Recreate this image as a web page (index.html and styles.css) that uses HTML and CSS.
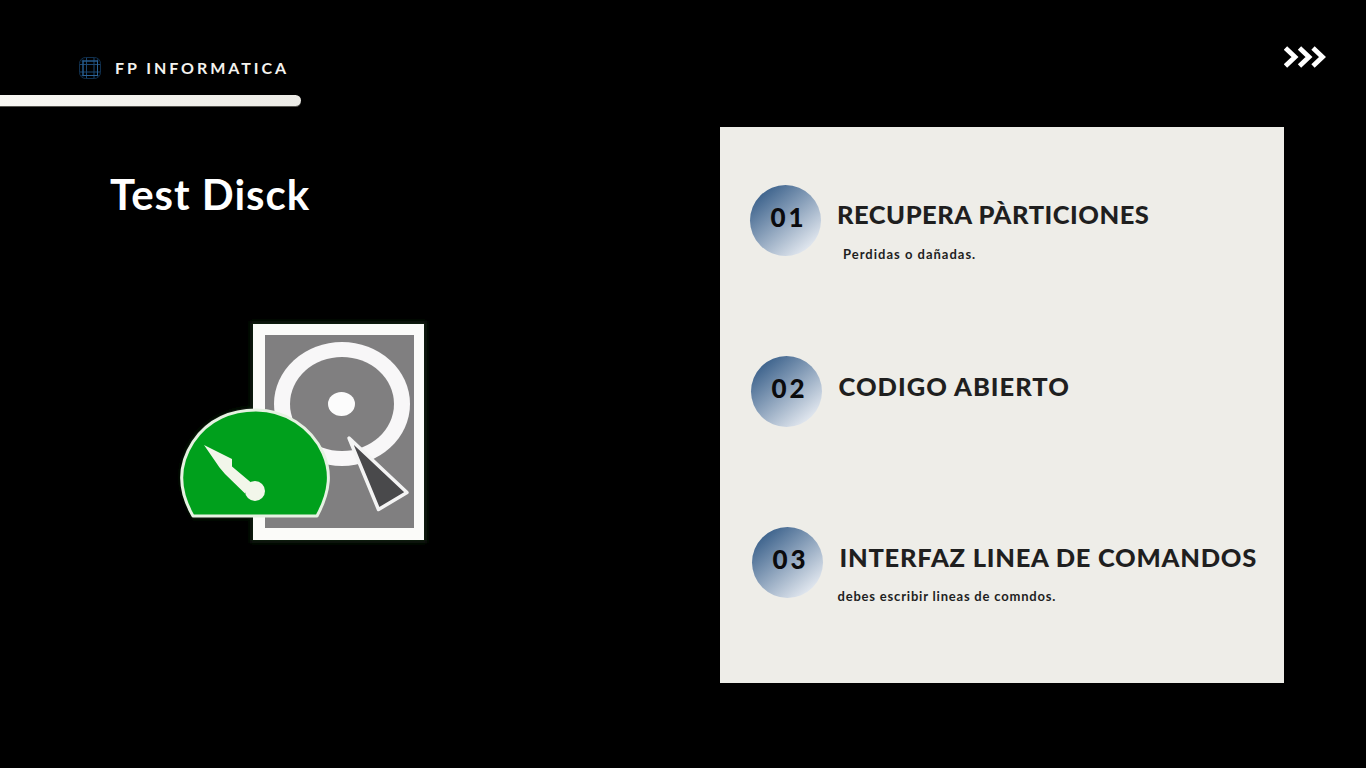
FILE: index.html
```html
<!DOCTYPE html>
<html lang="es">
<head>
<meta charset="utf-8">
<title>Test Disck</title>
<link rel="stylesheet" href="styles.css">
</head>
<body>
<main class="slide">
  <section class="left">
    <div class="brand">
      <svg class="brand-icon" viewBox="0 0 22 22" fill="none" stroke="#1b4670" stroke-width="1">
        <path d="M4 2.500V19.500M7.500 0.500V21.500M15 0.500V21.500M18.500 2.500V19.500"/>
        <path d="M2.500 4H19.500M0.500 7.500H21.500M0.500 15H21.500M2.500 18.500H19.500"/>
        <rect x="0.500" y="0.500" width="21" height="21" rx="6" stroke="#10304f"/>
        <rect x="4" y="4" width="14.500" height="14.500" stroke="#2a6296"/>
      </svg>
      <span class="brand-name">FP INFORMATICA</span>
    </div>
    <div class="bar"></div>
    <h1 class="title">Test Disck</h1>
    <svg class="disk" viewBox="170 315 265 235">
      <defs>
        <filter id="soft" x="-10%" y="-10%" width="120%" height="120%">
          <feGaussianBlur stdDeviation="0.6"/>
        </filter>
        <filter id="halo" x="-10%" y="-10%" width="120%" height="120%">
          <feGaussianBlur stdDeviation="2"/>
        </filter>
      </defs>
      <g filter="url(#halo)" fill="#0a1f0c">
        <rect x="250" y="321" width="177" height="222"/>
        <path d="M193 519 C176 490 176 465 191 440 C207 417 232 407 256 407 C285 407 312 425 325 451 C334 470 334 490 319 519 Z"/>
      </g>
      <g filter="url(#soft)">
        <rect x="253" y="324" width="171" height="216" fill="#fbfbf9"/>
        <rect x="265" y="335" width="149" height="193" fill="#807f80"/>
        <ellipse cx="342" cy="404" rx="68" ry="62" fill="#f8f7f8"/>
        <ellipse cx="342" cy="404" rx="52" ry="47" fill="#807f80"/>
        <ellipse cx="341.500" cy="404" rx="13.500" ry="12" fill="#fcfcfc"/>
        <path d="M349 438 L407 492.500 L378.500 509.500 Z" fill="#4a484b" stroke="#f4f4f4" stroke-width="3.500" stroke-linejoin="round"/>
        <path d="M193 516 C178 490 178 465 193 442 C208 419 232 410 256 410 C285 410 311 427 323 453 C331 471 331 490 317 516 Z" fill="#03a01f" stroke="#e6f2e2" stroke-width="3" stroke-linejoin="round"/>
        <path d="M204 445 L232 459 L232 466.500 L251 482.500 L245 493.500 L225 474 L219.500 467.500 Z" fill="#f2f6ea"/>
        <circle cx="255" cy="491" r="10" fill="#f2f6ea"/>
      </g>
    </svg>
  </section>
  <section class="card">
    <article class="row row-one">
      <div class="badge">01</div>
      <div class="body">
        <h2 class="heading">RECUPERA PÀRTICIONES</h2>
        <p class="note note-indent">Perdidas o dañadas.</p>
      </div>
    </article>
    <article class="row row-two">
      <div class="badge">02</div>
      <div class="body">
        <h2 class="heading">CODIGO ABIERTO</h2>
      </div>
    </article>
    <article class="row row-three">
      <div class="badge">03</div>
      <div class="body">
        <h2 class="heading">INTERFAZ LINEA DE COMANDOS</h2>
        <p class="note note-back">debes escribir lineas de comndos.</p>
      </div>
    </article>
  </section>
  <aside class="side">
    <svg class="arrows" viewBox="0 0 42 22" fill="none" stroke="#fff" stroke-width="4.800">
      <path d="M1.500 2 L11 11 L1.500 20"/>
      <path d="M15.500 2 L25 11 L15.500 20"/>
      <path d="M29 2 L38.500 11 L29 20"/>
    </svg>
  </aside>
</main>
</body>
</html>
```
FILE: styles.css
```css
* { box-sizing: border-box; }
html, body { margin: 0; padding: 0; background: #000; }
.slide {
  width: 1366px;
  height: 768px;
  background: #000;
  display: flex;
  overflow: hidden;
  font-family: Lato, "Liberation Sans", sans-serif;
}
.left { width: 720px; flex: none; padding-top: 57px; }
.brand { display: flex; align-items: center; height: 22px; padding-left: 79px; gap: 14px; }
.brand-icon { width: 22px; height: 22px; flex: none; }
.brand-name {
  color: #f4f3ef;
  font-size: 16px;
  line-height: 20px;
  font-weight: 700;
  letter-spacing: 2.95px;
  white-space: nowrap;
}
.bar {
  width: 301px;
  height: 11px;
  margin-top: 16px;
  border-radius: 0 6px 6px 0;
  background: linear-gradient(90deg, #f8f7f3, #ecebe6);
  box-shadow: 0 1px 0 #55544f;
}
.title {
  margin: 63px 0 0 110px;
  color: #fff;
  font-size: 42px;
  line-height: 50px;
  font-weight: 700;
  letter-spacing: 1px;
  white-space: nowrap;
}
.disk { display: block; width: 265px; height: 235px; margin: 96px 0 0 170px; }
.card {
  width: 564px;
  height: 556px;
  flex: none;
  margin-top: 127px;
  padding-top: 58px;
  background: #eeede8;
  display: flex;
  flex-direction: column;
  gap: 100px;
}
.row { display: flex; gap: 16px; height: 71px; flex: none; }
.row-one { padding-left: 30px; }
.row-two { padding-left: 31px; }
.row-three { padding-left: 32px; }
.badge {
  width: 71px;
  height: 71px;
  flex: none;
  padding-left: 6px;
  border-radius: 50%;
  background: linear-gradient(140deg, #365d88 10%, #eaeef4 90%);
  color: #0b0b0d;
  font-size: 26px;
  font-weight: 900;
  letter-spacing: 3px;
  line-height: 65px;
  text-align: center;
}
.body { padding-top: 12px; }
.heading {
  margin: 0;
  color: #1f1f1f;
  font-size: 25.500px;
  line-height: 34px;
  font-weight: 900;
  letter-spacing: 0.5px;
  white-space: nowrap;
}
.row-two .heading { letter-spacing: 1px; }
.row-three .heading { letter-spacing: 0.75px; }
.row-two .body, .row-three .body { padding-top: 13px; }
.row-two, .row-three { gap: 16.500px; }
.note {
  margin: 14px 0 0;
  color: #1f1f1f;
  font-size: 13px;
  line-height: 18px;
  font-weight: 700;
  letter-spacing: 1px;
  white-space: nowrap;
}
.note-indent { padding-left: 6px; }
.note-back { margin-left: -2px; margin-top: 13px; letter-spacing: 0.8px; }
.side { flex: 1; padding-top: 46px; }
.arrows { display: block; width: 42px; height: 22px; }
```
